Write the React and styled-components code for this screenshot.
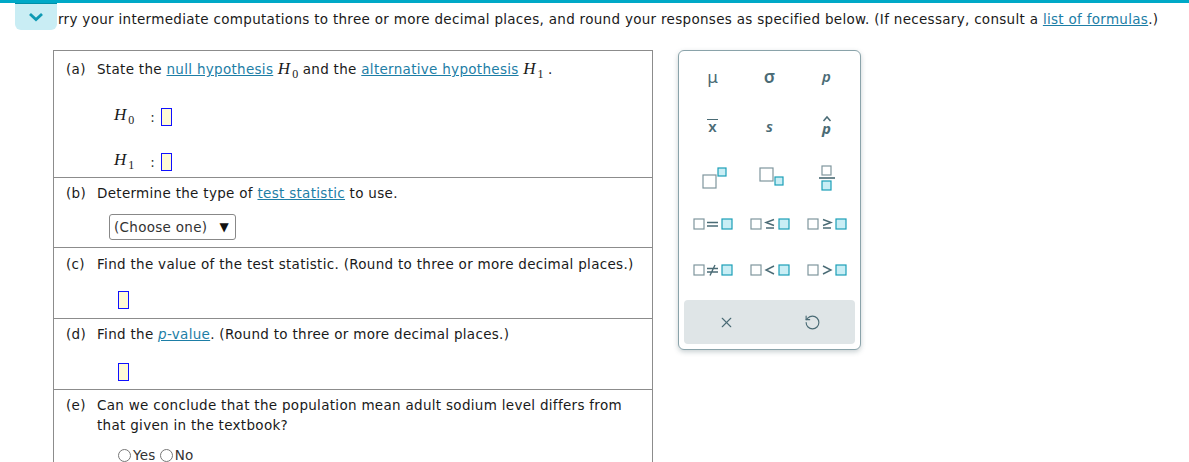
import React from "react";
import styled, { createGlobalStyle } from "styled-components";
import { X, RotateCcw } from "lucide-react";

const Global = createGlobalStyle`
  html, body { margin: 0; padding: 0; background: #fff; }
  body {
    font-family: "DejaVu Sans", Verdana, sans-serif;
    font-size: 13.5px;
    letter-spacing: 0.3px;
    color: #1a1a1a;
    overflow: hidden;
  }
`;

const Page = styled.div`
  width: 1189px;
  height: 462px;
  border-top: 3px solid #00a9c7;
  box-sizing: border-box;
`;

const TopLine = styled.div`
  display: flex;
  align-items: flex-start;
  height: 47px;
`;

const Toggle = styled.button`
  margin-left: 15px;
  width: 42px;
  height: 27px;
  border: none;
  border-top: 1px solid #008fa8;
  background: #c9edf4;
  border-radius: 0 0 6px 6px;
  display: flex;
  align-items: center;
  justify-content: center;
  padding: 0;
`;

const Intro = styled.div`
  padding-top: 8px;
  padding-left: 1px;
`;

const Link = styled.a`
  color: #1d7ea6;
  text-decoration: underline;
  cursor: pointer;
`;

const Body = styled.div`
  display: flex;
  align-items: flex-start;
  padding-left: 53px;
  gap: 25px;
`;

const Table = styled.div`
  width: 600px;
  border: 1px solid #8c8c8c;
  border-bottom: none;
  box-sizing: border-box;
`;

const Part = styled.div`
  border-top: ${(p) => (p.first ? "none" : "1px solid #8c8c8c")};
  height: ${(p) => p.h}px;
  box-sizing: border-box;
  padding: ${(p) => p.pt || 7}px 0 0 12px;
`;

const Lead = styled.div`
  display: flex;
  line-height: 20px;
`;

const Tag = styled.span`
  width: 31px;
  flex: none;
`;

const Math = styled.span`
  font-family: "Liberation Serif", "Times New Roman", serif;
  font-style: italic;
  font-size: 17px;
  letter-spacing: 0;
  sub {
    font-style: normal;
    font-size: 12px;
    vertical-align: -4px;
    margin-left: 2px;
  }
`;

const HypRow = styled.div`
  display: flex;
  align-items: center;
  padding-left: 48px;
  margin-top: ${(p) => p.mt}px;
  gap: 6px;
`;

const Colon = styled.span`
  margin-left: 10px;
  color: #333;
`;

const Blank = styled.span`
  display: inline-block;
  width: 9px;
  height: 16px;
  border: 1px solid #1010ff;
  background: #fffad6;
`;

const AnswerRow = styled.div`
  padding-left: 52px;
  margin-top: ${(p) => p.mt}px;
  display: flex;
`;

const Select = styled.div`
  margin-left: 43px;
  margin-top: ${(p) => p.mt}px;
  display: inline-flex;
  align-items: center;
  gap: 12px;
  height: 24px;
  padding: 0 6px 0 4px;
  border: 1px solid #888;
  border-radius: 3px;
  color: #333;
  span { font-size: 12px; color: #111; }
`;

const Radios = styled.div`
  display: flex;
  gap: 4px;
  padding-left: 52px;
  margin-top: 12px;
  color: #333;
  label { display: flex; align-items: center; gap: 2px; }
`;

const RadioDot = styled.span`
  width: 11px;
  height: 11px;
  border: 1px solid #777;
  border-radius: 50%;
  display: inline-block;
`;

const Palette = styled.div`
  width: 183px;
  height: 300px;
  border: 1px solid #8aa3aa;
  border-radius: 6px;
  box-shadow: 0 2px 5px rgba(40, 70, 80, 0.25);
  box-sizing: border-box;
  padding: 0 5px;
  display: flex;
  flex-direction: column;
  background: #fff;
`;

const Grid = styled.div`
  display: grid;
  grid-template-columns: repeat(3, 1fr);
  grid-auto-rows: ${(p) => p.rh}px;
  margin-top: ${(p) => p.mt}px;
`;

const Key = styled.div`
  display: flex;
  align-items: center;
  justify-content: center;
  color: #4a6b75;
  font-family: "Noto Sans", "Open Sans", sans-serif;
  font-weight: ${(p) => p.fw || 600};
  font-size: ${(p) => p.fs || 15}px;
  font-style: ${(p) => (p.it ? "italic" : "normal")};
  letter-spacing: 0;
`;

const Bar = styled.div`
  margin-top: auto;
  margin-bottom: 5px;
  height: 44px;
  border-radius: 4px;
  background: #dfe5e7;
  display: grid;
  grid-template-columns: 1fr 1fr;
  align-items: center;
  justify-items: center;
  color: #4a6b75;
`;

const XBar = styled.span`
  border-top: 1.6px solid #4a6b75;
  line-height: 13px;
  padding: 0 1px;
`;

const Box = ({ x, y, s, fill }) => (
  <rect
    x={x}
    y={y}
    width={s}
    height={s}
    fill={fill ? "#c9eef5" : "#fff"}
    stroke={fill ? "#1b9fb7" : "#7f969d"}
    strokeWidth="1.2"
  />
);

const Rel = ({ children }) => (
  <svg width="40" height="14" viewBox="0 0 40 14">
    <Box x={1} y={2} s={10} />
    {children}
    <Box x={29} y={2} s={10} fill />
  </svg>
);

const relStroke = { stroke: "#4a6b75", strokeWidth: 1.4, fill: "none" };

const App = () => (
  <Page>
    <Global />
    <TopLine>
      <Toggle>
        <svg width="16" height="10" viewBox="0 0 16 10">
          <path d="M2 2 L8 7.5 L14 2" stroke="#0f9ab4" strokeWidth="2.8" fill="none" />
        </svg>
      </Toggle>
      <Intro>
        rry your intermediate computations to three or more decimal places, and round your responses as specified below. (If necessary, consult a{" "}
        <Link>list of formulas</Link>.)
      </Intro>
    </TopLine>
    <Body>
      <Table>
        <Part first h={126} pt={8}>
          <Lead>
            <Tag>(a)</Tag>
            <span>
              State the <Link>null hypothesis</Link> <Math>H<sub>0</sub></Math> and the{" "}
              <Link>alternative hypothesis</Link> <Math>H<sub>1</sub></Math> .
            </span>
          </Lead>
          <HypRow mt={21}>
            <Math>H<sub>0</sub></Math>
            <Colon>:</Colon>
            <Blank />
          </HypRow>
          <HypRow mt={22}>
            <Math>H<sub>1</sub></Math>
            <Colon>:</Colon>
            <Blank />
          </HypRow>
        </Part>
        <Part h={70} pt={5}>
          <Lead>
            <Tag>(b)</Tag>
            <span>
              Determine the type of <Link>test statistic</Link> to use.
            </span>
          </Lead>
          <Select mt={11}>
            (Choose one) <span>▼</span>
          </Select>
        </Part>
        <Part h={71} pt={6}>
          <Lead>
            <Tag>(c)</Tag>
            <span>Find the value of the test statistic. (Round to three or more decimal places.)</span>
          </Lead>
          <AnswerRow mt={17}>
            <Blank />
          </AnswerRow>
        </Part>
        <Part h={71} pt={5}>
          <Lead>
            <Tag>(d)</Tag>
            <span>
              Find the <Link><i>p</i>-value</Link>. (Round to three or more decimal places.)
            </span>
          </Lead>
          <AnswerRow mt={19}>
            <Blank />
          </AnswerRow>
        </Part>
        <Part h={80} pt={5}>
          <Lead>
            <Tag>(e)</Tag>
            <span>
              Can we conclude that the population mean adult sodium level differs from
              <br />
              that given in the textbook?
            </span>
          </Lead>
          <Radios>
            <label><RadioDot />Yes</label>
            <label><RadioDot />No</label>
          </Radios>
        </Part>
      </Table>
      <Palette>
        <Grid rh={50} mt={0}>
          <Key fs={17} fw={400}>μ</Key>
          <Key fs={18}>σ</Key>
          <Key it fs={15}>p</Key>
          <Key fs={15}>
            <XBar>x</XBar>
          </Key>
          <Key it fs={15}>s</Key>
          <Key>
            <svg width="14" height="24" viewBox="0 0 14 24">
              <path d="M3.5 7 L7 3 L10.5 7" {...relStroke} strokeWidth="1.5" />
              <text x="2" y="20" fontSize="15" fontStyle="italic" fontWeight="700" fill="#4a6b75" fontFamily="Noto Sans, sans-serif">p</text>
            </svg>
          </Key>
        </Grid>
        <Grid rh={50} mt={2}>
          <Key>
            <svg width="28" height="24" viewBox="0 0 28 24">
              <Box x={4} y={9} s={13} />
              <Box x={19} y={2} s={8} fill />
            </svg>
          </Key>
          <Key>
            <svg width="28" height="24" viewBox="0 0 28 24">
              <Box x={4} y={2} s={13} />
              <Box x={19} y={11} s={8} fill />
            </svg>
          </Key>
          <Key>
            <svg width="20" height="28" viewBox="0 0 20 28">
              <Box x={5} y={2} s={9} />
              <line x1="2" y1="14" x2="18" y2="14" stroke="#4a6b75" strokeWidth="1.6" />
              <Box x={5} y={17} s={9} fill />
            </svg>
          </Key>
        </Grid>
        <Grid rh={46} mt={-2}>
          <Key>
            <Rel>
              <path d="M14 5.5 H25 M14 9 H25" {...relStroke} />
            </Rel>
          </Key>
          <Key>
            <Rel>
              <path d="M24 2.5 L16 5.5 L24 8.5 M16 11 H24" {...relStroke} />
            </Rel>
          </Key>
          <Key>
            <Rel>
              <path d="M16 2.5 L24 5.5 L16 8.5 M16 11 H24" {...relStroke} />
            </Rel>
          </Key>
          <Key>
            <Rel>
              <path d="M14 5.5 H25 M14 9 H25 M22 2 L17 12.5" {...relStroke} />
            </Rel>
          </Key>
          <Key>
            <Rel>
              <path d="M24 3 L16 7 L24 11" {...relStroke} />
            </Rel>
          </Key>
          <Key>
            <Rel>
              <path d="M16 3 L24 7 L16 11" {...relStroke} />
            </Rel>
          </Key>
        </Grid>
        <Bar>
          <X size={17} strokeWidth={1.6} />
          <RotateCcw size={17} strokeWidth={1.6} />
        </Bar>
      </Palette>
    </Body>
  </Page>
);

export default App;
